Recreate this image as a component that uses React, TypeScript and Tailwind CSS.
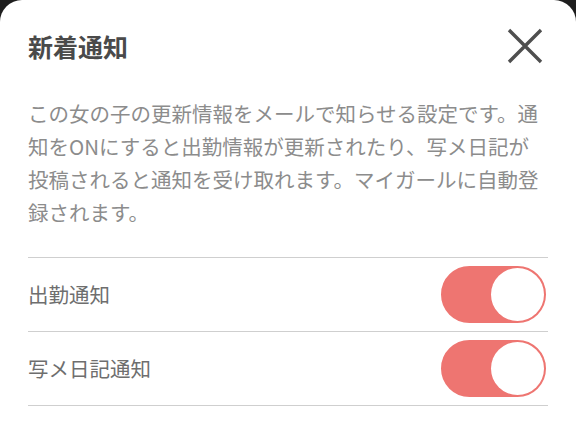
import React, { useState } from 'react';

const Toggle: React.FC<{ on: boolean; onChange: () => void }> = ({ on, onChange }) => (
  <button
    type="button"
    onClick={onChange}
    className={`relative mr-[2px] flex h-[57px] w-[105px] items-center rounded-full border-2 transition-colors ${
      on ? 'border-[#ee7571] bg-[#ee7571]' : 'border-[#d4d4d4] bg-[#e5e5e5]'
    }`}
  >
    <span
      className={`absolute top-0 h-[53px] w-[53px] rounded-full bg-white transition-all ${
        on ? 'right-0' : 'left-0'
      }`}
    />
  </button>
);

export default function App() {
  const [shift, setShift] = useState(true);
  const [diary, setDiary] = useState(true);

  const rows = [
    { label: '出勤通知', on: shift, toggle: () => setShift(v => !v) },
    { label: '写メ日記通知', on: diary, toggle: () => setDiary(v => !v) },
  ];

  return (
    <div className="min-h-screen bg-[#1e1e1e] font-['Noto_Sans_CJK_JP','Noto_Sans',sans-serif]">
      <div className="min-h-[424px] rounded-t-[22px] bg-white px-7">
        {/* Header */}
        <div className="flex items-center justify-between pt-[28px]">
          <h2 className="text-[25px] font-bold leading-8 text-[#4a4a4a]">新着通知</h2>
          <button type="button" className="mr-[5px] text-[#4f4f4f]">
            <svg width="36" height="36" viewBox="0 0 36 36" fill="none">
              <path d="M2 2 L34 34 M34 2 L2 34" stroke="currentColor" strokeWidth="3.4" />
            </svg>
          </button>
        </div>

        {/* Description */}
        <p className="mt-[33px] text-[20.5px] leading-[33px] text-[#8c8c8c]">
          この女の子の更新情報をメールで知らせる設定です。通知をONにすると出勤情報が更新されたり、写メ日記が投稿されると通知を受け取れます。マイガールに自動登録されます。
        </p>

        {/* Settings */}
        <div className="mt-[28px] border-t border-[#cfcfcf]">
          {rows.map(row => (
            <div
              key={row.label}
              className="flex h-[74px] items-center justify-between border-b border-[#cfcfcf]"
            >
              <span className="text-[20.5px] text-[#6e6e6e]">{row.label}</span>
              <Toggle on={row.on} onChange={row.toggle} />
            </div>
          ))}
        </div>
      </div>
    </div>
  );
}
